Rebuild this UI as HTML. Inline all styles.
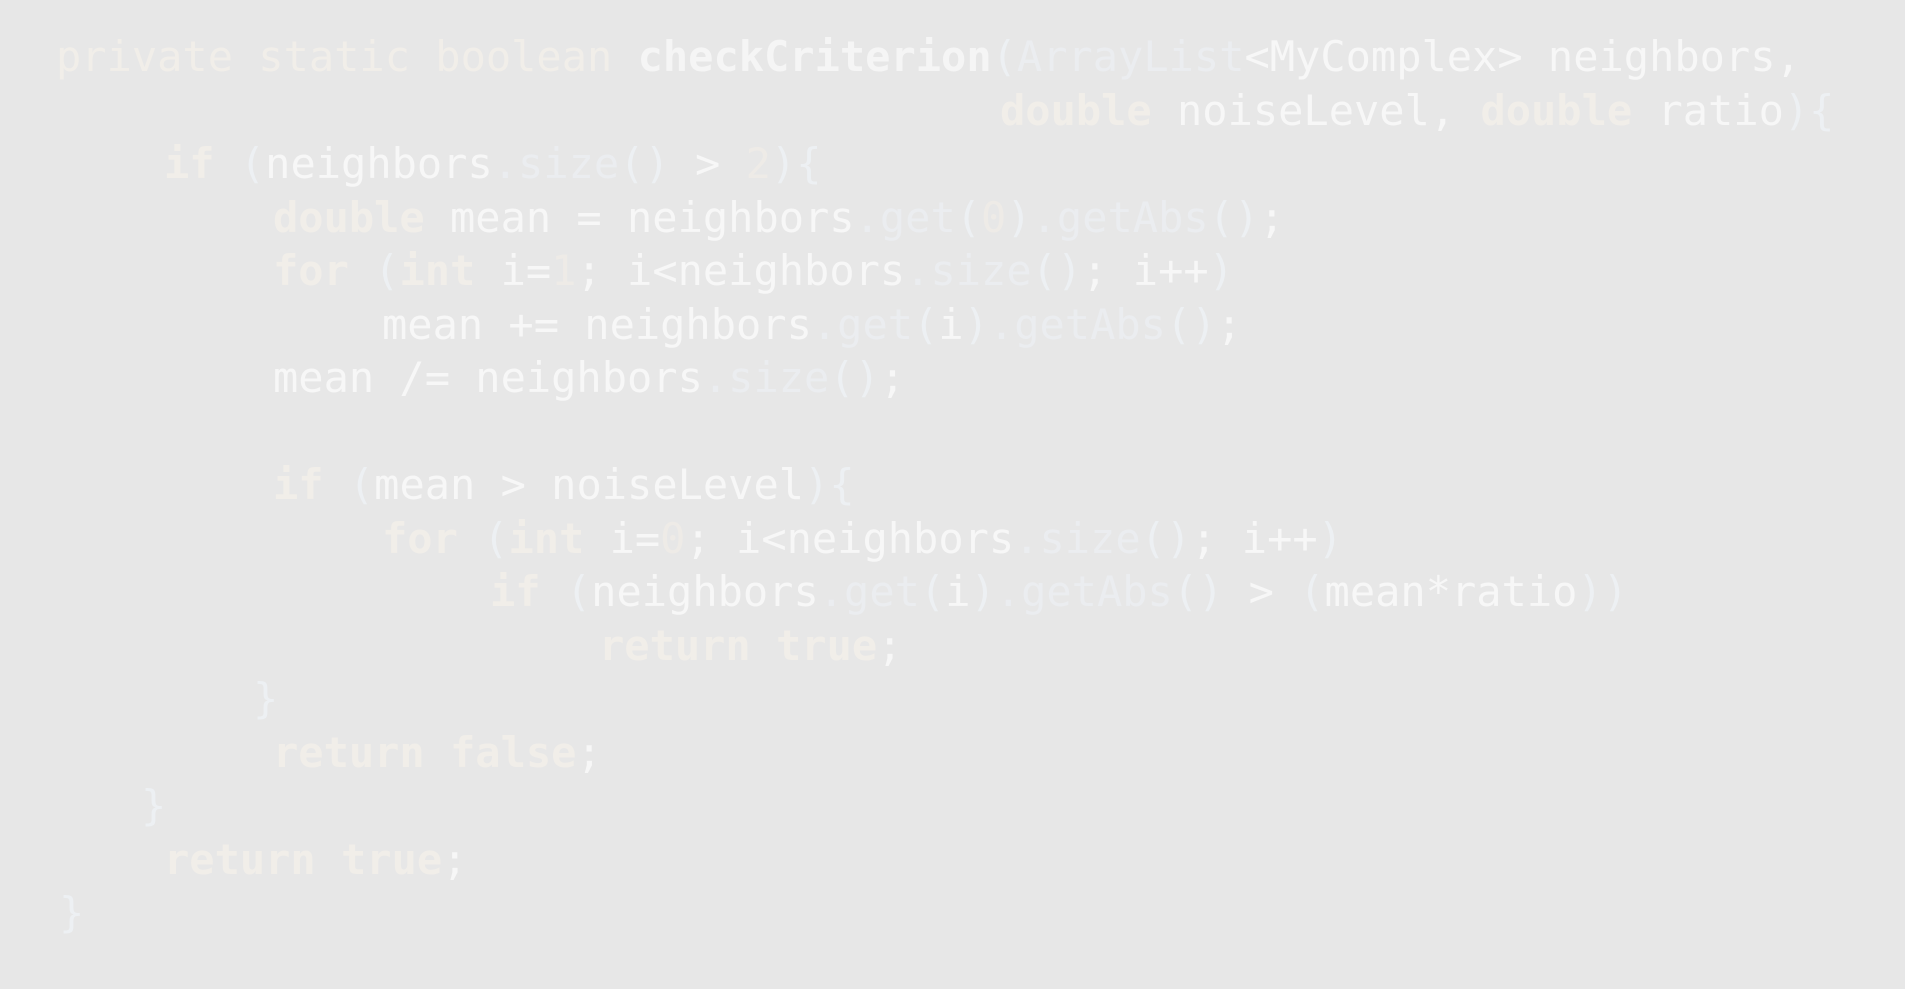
<!DOCTYPE html>
<html><head><meta charset="utf-8"><style>
html,body{margin:0;padding:0;width:1905px;height:989px;background:#e7e7e7;overflow:hidden}
.l{position:absolute;white-space:pre;font-family:"DejaVu Sans Mono","Liberation Mono",monospace;font-size:42px;line-height:53.5px;color:#f7f7f7}
.k{color:#f1eee9;font-weight:bold}
.r{color:#f1eee9}
.m{color:#ebedf0}
.p{color:#edf0f3}
.n{color:#eeebe7}
.f{color:#f5f5f5;font-weight:bold}
</style></head><body>
<div class="l" style="left:56px;top:30px"><span class="r">private static boolean</span> <span class="f">checkCriterion</span><span class="p">(</span><span class="m">ArrayList</span>&lt;MyComplex&gt; neighbors,</div>
<div class="l" style="left:1000px;top:83.5px"><span class="k">double</span> noiseLevel, <span class="k">double</span> ratio<span class="p">){</span></div>
<div class="l" style="left:164px;top:137px"><span class="k">if</span> <span class="p">(</span>neighbors<span class="m">.size</span><span class="p">()</span> &gt; <span class="n">2</span><span class="p">){</span></div>
<div class="l" style="left:273px;top:190.5px"><span class="k">double</span> mean = neighbors<span class="m">.get</span><span class="p">(</span><span class="n">0</span><span class="p">)</span><span class="m">.getAbs</span><span class="p">()</span>;</div>
<div class="l" style="left:273px;top:244px"><span class="k">for</span> <span class="p">(</span><span class="k">int</span> i=<span class="n">1</span>; i&lt;neighbors<span class="m">.size</span><span class="p">()</span>; i++<span class="p">)</span></div>
<div class="l" style="left:382px;top:297.5px">mean += neighbors<span class="m">.get</span><span class="p">(</span>i<span class="p">)</span><span class="m">.getAbs</span><span class="p">()</span>;</div>
<div class="l" style="left:273px;top:351px">mean /= neighbors<span class="m">.size</span><span class="p">()</span>;</div>
<div class="l" style="left:273px;top:458px"><span class="k">if</span> <span class="p">(</span>mean &gt; noiseLevel<span class="p">){</span></div>
<div class="l" style="left:382px;top:511.5px"><span class="k">for</span> <span class="p">(</span><span class="k">int</span> i=<span class="n">0</span>; i&lt;neighbors<span class="m">.size</span><span class="p">()</span>; i++<span class="p">)</span></div>
<div class="l" style="left:490px;top:565px"><span class="k">if</span> <span class="p">(</span>neighbors<span class="m">.get</span><span class="p">(</span>i<span class="p">)</span><span class="m">.getAbs</span><span class="p">()</span> &gt; <span class="p">(</span>mean*ratio<span class="p">))</span></div>
<div class="l" style="left:599px;top:618.5px"><span class="k">return true</span>;</div>
<div class="l" style="left:253px;top:672px"><span class="p">}</span></div>
<div class="l" style="left:273px;top:725.5px"><span class="k">return false</span>;</div>
<div class="l" style="left:141px;top:779px"><span class="p">}</span></div>
<div class="l" style="left:164px;top:832.5px"><span class="k">return true</span>;</div>
<div class="l" style="left:59px;top:886px"><span class="p">}</span></div>
</body></html>
